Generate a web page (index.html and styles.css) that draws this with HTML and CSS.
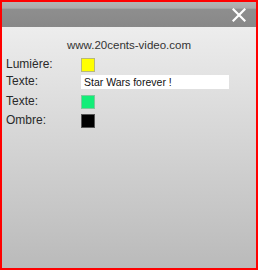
FILE: index.html
```html
<!DOCTYPE html>
<html>
<head>
<meta charset="utf-8">
<link rel="stylesheet" href="styles.css">
</head>
<body>
<div class="frame">
  <div class="header">
    <svg class="close" width="14" height="14" viewBox="0 0 14 14"><path d="M1.5 1.5 L12.5 12.5 M12.5 1.5 L1.5 12.5" stroke="#fff" stroke-width="2.2" stroke-linecap="square"/></svg>
  </div>
  <div class="body">
    <div class="title">www.20cents-video.com</div>
    <div class="form">
      <div class="row r1"><span class="label">Lumière:</span><span class="swatch yellow"></span></div>
      <div class="row r2"><span class="label">Texte:</span><span class="field">Star Wars forever !</span></div>
      <div class="row r3"><span class="label">Texte:</span><span class="swatch green"></span></div>
      <div class="row r4"><span class="label">Ombre:</span><span class="swatch black"></span></div>
    </div>
  </div>
</div>
</body>
</html>
```
FILE: styles.css
```css
html, body { margin: 0; padding: 0; }
body { width: 258px; height: 270px; overflow: hidden; font-family: "Liberation Sans", Arial, sans-serif; }
.frame {
  width: 258px; height: 270px; box-sizing: border-box;
  border: 2px solid #ff0000;
  display: flex; flex-direction: column;
}
.header {
  height: 25px; flex: none;
  background: linear-gradient(#b4b4b4 0, #aaaaaa 24%, #8e8e8e 30%, #888888 100%);
  display: flex; justify-content: flex-end; align-items: flex-start;
}
.close { margin: 6px 10px 0 0; }
.body {
  flex: 1;
  background: linear-gradient(#ededed 0, #d6d6d6 45%, #bababa 100%);
  padding: 11px 4px 0 4px;
}
.title {
  font-size: 11.5px; line-height: 14px; color: #333;
  text-align: center; margin-left: -4px; margin-right: -4px;
}
.form { margin-top: 6px; display: flex; flex-direction: column; }
.row { display: flex; align-items: flex-start; height: 14px; }
.r2 { margin-top: 3px; }
.r3 { margin-top: 6px; }
.r4 { margin-top: 5px; }
.label { width: 75px; font-size: 12px; line-height: 12px; color: #2a2a2a; }
.swatch { width: 14px; height: 14px; box-sizing: border-box; border: 1px solid #9a9a8a; }
.yellow { background: #ffff00; border-color: #b8b87a; }
.green { background: #12ee78; border-color: #7ec89c; }
.black { background: #000; border-color: #555; }
.field {
  width: 148px; height: 14px; background: #fff; box-sizing: border-box;
  font-size: 10.5px; line-height: 14px; color: #111; padding-left: 3px;
}
```
